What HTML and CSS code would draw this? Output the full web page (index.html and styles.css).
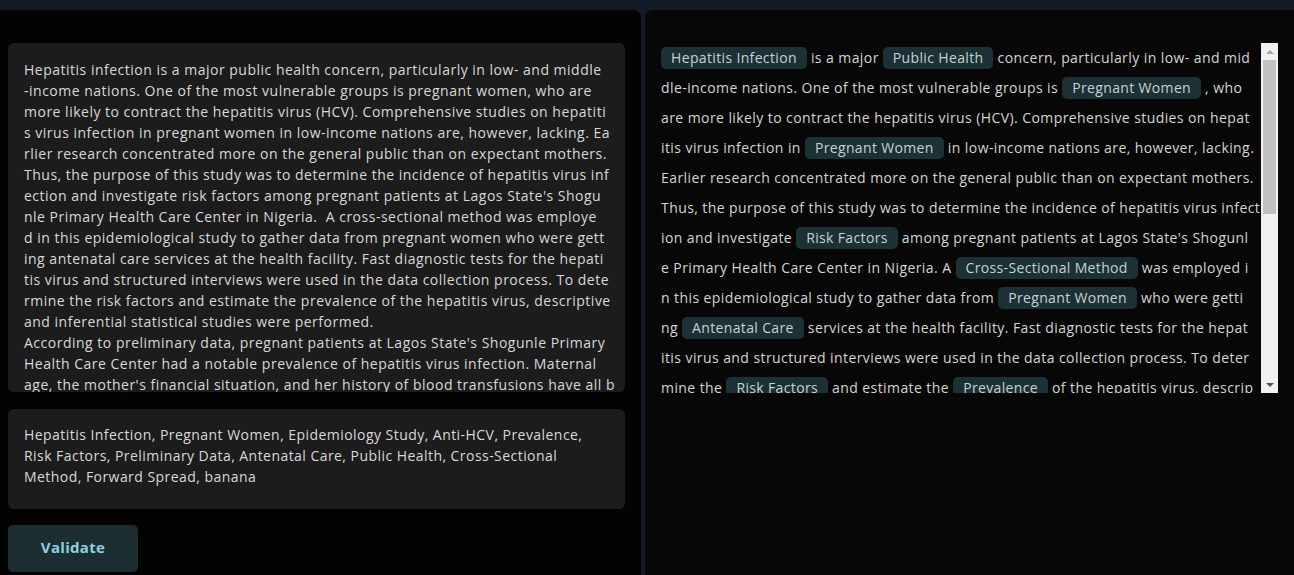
FILE: index.html
```html
<!DOCTYPE html>
<html lang="en">
<head>
<meta charset="utf-8">
<title>Keyword Validation</title>
<link rel="stylesheet" href="styles.css">
</head>
<body>
<div class="app">
  <section class="panel panel-left">
    <div class="abstract">
      <span class="ln">Hepatitis infection is a major public health concern, particularly in low- and middle</span>
      <span class="ln">-income nations. One of the most vulnerable groups is pregnant women, who are</span>
      <span class="ln">more likely to contract the hepatitis virus (HCV). Comprehensive studies on hepatiti</span>
      <span class="ln">s virus infection in pregnant women in low-income nations are, however, lacking. Ea</span>
      <span class="ln">rlier research concentrated more on the general public than on expectant mothers.</span>
      <span class="ln">Thus, the purpose of this study was to determine the incidence of hepatitis virus inf</span>
      <span class="ln">ection and investigate risk factors among pregnant patients at Lagos State's Shogu</span>
      <span class="ln">nle Primary Health Care Center in Nigeria.  A cross-sectional method was employe</span>
      <span class="ln">d in this epidemiological study to gather data from pregnant women who were gett</span>
      <span class="ln">ing antenatal care services at the health facility. Fast diagnostic tests for the hepati</span>
      <span class="ln">tis virus and structured interviews were used in the data collection process. To dete</span>
      <span class="ln">rmine the risk factors and estimate the prevalence of the hepatitis virus, descriptive</span>
      <span class="ln">and inferential statistical studies were performed.</span>
      <span class="ln">According to preliminary data, pregnant patients at Lagos State's Shogunle Primary</span>
      <span class="ln">Health Care Center had a notable prevalence of hepatitis virus infection. Maternal</span>
      <span class="ln">age, the mother's financial situation, and her history of blood transfusions have all b</span>
    </div>
    <div class="keywords">Hepatitis Infection, Pregnant Women, Epidemiology Study, Anti-HCV, Prevalence, Risk Factors, Preliminary Data, Antenatal Care, Public Health, Cross-Sectional Method, Forward Spread, banana</div>
    <button class="validate" type="button">Validate</button>
  </section>
  <section class="panel panel-right">
    <div class="viewer">
      <div class="viewer-text">
        <div class="vl"><span class="tag">Hepatitis Infection</span> is a major <span class="tag">Public Health</span> concern, particularly in low- and mid</div>
        <div class="vl">dle-income nations. One of the most vulnerable groups is <span class="tag">Pregnant Women</span> , who</div>
        <div class="vl">are more likely to contract the hepatitis virus (HCV). Comprehensive studies on hepat</div>
        <div class="vl">itis virus infection in <span class="tag">Pregnant Women</span> in low-income nations are, however, lacking.</div>
        <div class="vl">Earlier research concentrated more on the general public than on expectant mothers.</div>
        <div class="vl">Thus, the purpose of this study was to determine the incidence of hepatitis virus infect</div>
        <div class="vl">ion and investigate <span class="tag">Risk Factors</span> among pregnant patients at Lagos State's Shogunl</div>
        <div class="vl">e Primary Health Care Center in Nigeria. A <span class="tag">Cross-Sectional Method</span> was employed i</div>
        <div class="vl">n this epidemiological study to gather data from <span class="tag">Pregnant Women</span> who were getti</div>
        <div class="vl">ng <span class="tag">Antenatal Care</span> services at the health facility. Fast diagnostic tests for the hepat</div>
        <div class="vl">itis virus and structured interviews were used in the data collection process. To deter</div>
        <div class="vl">mine the <span class="tag">Risk Factors</span> and estimate the <span class="tag">Prevalence</span> of the hepatitis virus, descrip</div>
      </div>
      <div class="scrollbar" aria-hidden="true">
        <span class="sb-arrow sb-up"></span>
        <span class="sb-track"><span class="sb-thumb"></span></span>
        <span class="sb-arrow sb-down"></span>
      </div>
    </div>
  </section>
</div>
</body>
</html>
```

FILE: styles.css
```css
* { box-sizing: border-box; }

html, body {
  margin: 0;
  height: 100%;
}

body {
  background: #131a27;
  font-family: "Open Sans", "Noto Sans", sans-serif;
  color: #d6d6d6;
  overflow: hidden;
}

.app {
  display: flex;
  gap: 4px;
  height: 100%;
  padding-top: 10px;
}

.panel {
  background: #030303;
  padding-top: 33px;
}

.panel-left {
  width: 641px;
  flex: none;
  border-top-right-radius: 8px;
  padding-left: 8px;
  padding-right: 16px;
  display: flex;
  flex-direction: column;
}

.panel-right {
  flex: 1;
  border-top-left-radius: 8px;
  background: #070707;
  padding-left: 16px;
  padding-right: 16px;
}

.abstract {
  height: 349px;
  overflow: hidden;
  background: #1c1c1c;
  border-radius: 6px;
  padding: 16px 16px;
  font-size: 14px;
  line-height: 21px;
  letter-spacing: 0.5px;
  color: #d8d8d8;
}

.ln {
  display: block;
  white-space: pre;
}

.keywords {
  margin-top: 17px;
  height: 100px;
  background: #1c1c1c;
  border-radius: 6px;
  padding: 15px 16px 16px 16px;
  font-size: 14px;
  line-height: 21px;
  letter-spacing: 0.45px;
  color: #d8d8d8;
}

.validate {
  margin-top: 16px;
  width: 130px;
  height: 47px;
  border: none;
  border-radius: 5px;
  background: #1c2d32;
  color: #8fd0de;
  font-family: inherit;
  font-size: 15px;
  font-weight: 700;
  letter-spacing: 0.3px;
  padding: 0 0 3px;
  cursor: pointer;
}

.viewer {
  height: 350px;
  display: flex;
}

.viewer-text {
  flex: 1;
  overflow: hidden;
  font-size: 14px;
  line-height: 30px;
  letter-spacing: 0.42px;
  color: #d4d4d4;
}

.vl {
  white-space: nowrap;
}

.tag {
  display: inline-block;
  height: 22px;
  line-height: 22px;
  padding: 0 10px;
  border-radius: 5px;
  background: #1b3135;
  color: #c6d2d2;
  letter-spacing: 0.35px;
}

.scrollbar {
  width: 17px;
  flex: none;
  background: #f1f1f1;
  display: flex;
  flex-direction: column;
  align-items: center;
}

.sb-arrow {
  height: 17px;
  width: 100%;
  display: flex;
  align-items: center;
  justify-content: center;
  flex: none;
}

.sb-arrow::before {
  content: "";
  width: 0;
  height: 0;
  border-left: 4px solid transparent;
  border-right: 4px solid transparent;
}

.sb-up::before {
  border-bottom: 4px solid #a3a3a3;
}

.sb-down::before {
  border-top: 4px solid #505050;
}

.sb-track {
  flex: 1;
  width: 100%;
  padding: 0 2px;
}

.sb-thumb {
  display: block;
  height: 154px;
  background: #c1c1c1;
}
```
